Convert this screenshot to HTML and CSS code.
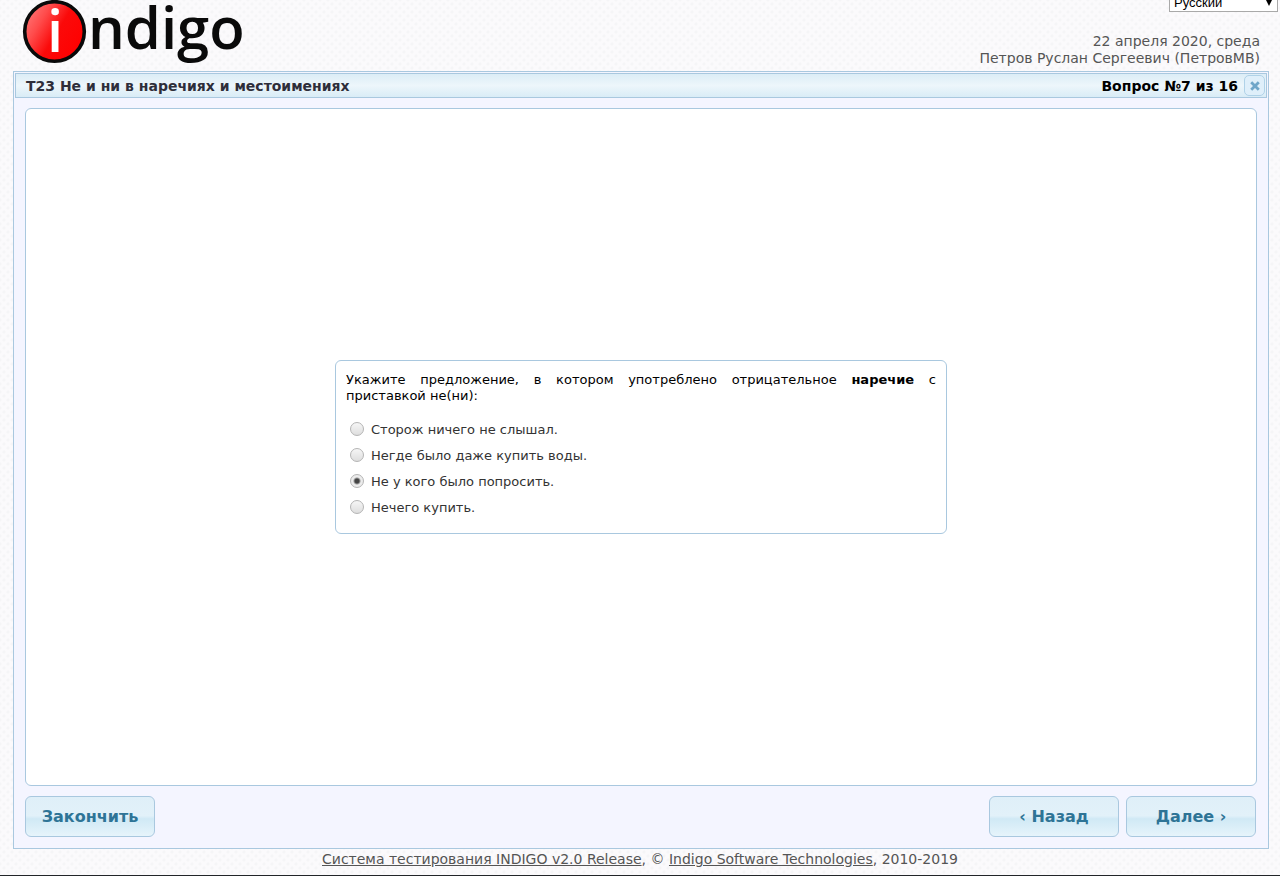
FILE: index.html
```html
<!DOCTYPE html>
<html lang="ru">
<head>
    <meta charset="UTF-8">
    <meta name="viewport" content="width=device-width, initial-scale=1.0">
    <title>INDIGO</title>
    <link rel="stylesheet" href="styles.css">
</head>
<body>
    <header class="header">
        <svg class="logo" width="240" height="68" viewBox="0 0 240 68" role="img" aria-label="indigo">
            <defs>
                <linearGradient id="ball" x1="0" y1="0.1" x2="1" y2="0.7">
                    <stop offset="0" stop-color="#ff8080"/>
                    <stop offset="0.3" stop-color="#ff4b4b"/>
                    <stop offset="0.58" stop-color="#fb0a0a"/>
                    <stop offset="1" stop-color="#ff0000"/>
                </linearGradient>
            </defs>
            <circle cx="41.5" cy="31.5" r="29.8" fill="url(#ball)" stroke="#0a0a0a" stroke-width="3.6"/>
            <text class="logo-i" x="42" y="52" text-anchor="middle">i</text>
            <text class="logo-text" x="75" y="49">ndigo</text>
        </svg>
        <div class="header-right">
            <div class="lang">
                <select class="lang-select" aria-label="Язык">
                    <option>Русский</option>
                </select>
            </div>
            <div class="user-info">
                <div>22 апреля 2020, среда</div>
                <div>Петров Руслан Сергеевич (ПетровМВ)</div>
            </div>
        </div>
    </header>

    <main class="window">
        <div class="titlebar">
            <h1 class="title">Т23 Не и ни в наречиях и местоимениях</h1>
            <span class="counter">Вопрос №7 из 16</span>
            <button type="button" class="close" aria-label="Закрыть">
                <svg width="10" height="10" viewBox="0 0 10 10">
                    <path d="M2.2 2.2L7.8 7.8M7.8 2.2L2.2 7.8" stroke="#6fa6c9" stroke-width="2.8" stroke-linecap="square"/>
                </svg>
            </button>
        </div>

        <div class="content">
            <form class="question" id="question">
                <p class="question-text">Укажите предложение, в котором употреблено отрицательное <b>наречие</b> с приставкой не(ни):</p>
                <div class="answers">
                    <label class="answer"><input type="radio" name="answer"> Сторож ничего не слышал.</label>
                    <label class="answer"><input type="radio" name="answer"> Негде было даже купить воды.</label>
                    <label class="answer"><input type="radio" name="answer" checked> Не у кого было попросить.</label>
                    <label class="answer"><input type="radio" name="answer"> Нечего купить.</label>
                </div>
            </form>
        </div>

        <div class="buttons">
            <button type="button" class="btn btn-finish">Закончить</button>
            <button type="button" class="btn">‹ Назад</button>
            <button type="button" class="btn">Далее ›</button>
        </div>
    </main>

    <footer class="footer">
        <a href="#">Система тестирования INDIGO v2.0 Release</a>, © <a href="#">Indigo Software Technologies</a>, 2010-2019
    </footer>
</body>
</html>
```
FILE: styles.css
```css
* {
    box-sizing: border-box;
}

body {
    display: flex;
    flex-direction: column;
    min-height: 100vh;
    margin: 0;
    font-family: Verdana, "DejaVu Sans", sans-serif;
    font-size: 14px;
    color: #555;
    background-color: #fbfafc;
    background-image:
        radial-gradient(circle, #f5f5f7 1px, transparent 2px),
        radial-gradient(circle, #f5f5f7 1px, transparent 2px);
    background-size: 8px 8px;
    background-position: 0 0, 4px 4px;
}

/* header */

.header {
    display: flex;
    justify-content: space-between;
    height: 71px;
    padding-left: 13px;
}

.logo {
    overflow: visible;
}

.logo-i,
.logo-text {
    font-family: "Open Sans", sans-serif;
    font-size: 58px;
    font-weight: 600;
    fill: #0a0a0a;
}

.logo-i {
    fill: #fff;
}

.header-right {
    display: flex;
    flex-direction: column;
    align-items: flex-end;
}

.lang {
    position: relative;
    margin: -8px 2px 21px 0;
}

.lang::after {
    content: "";
    position: absolute;
    top: 8px;
    right: 6px;
    border: 3px solid transparent;
    border-top: 6px solid #000;
    border-bottom: 0;
    pointer-events: none;
}

.lang-select {
    display: block;
    width: 109px;
    height: 20px;
    padding: 0 4px;
    border: 1px solid #a9a9a9;
    border-radius: 0;
    background: #fff;
    color: #000;
    font-family: "Liberation Sans", Arial, sans-serif;
    font-size: 13px;
    appearance: none;
}

.user-info {
    padding-right: 20px;
    line-height: 17px;
    text-align: right;
}

/* window */

.window {
    display: flex;
    flex-direction: column;
    flex: 1;
    margin: 0 11px 0 13px;
    padding: 1px;
    border: 1px solid #a9c8df;
    background: #f4f5ff;
}

.titlebar {
    display: flex;
    align-items: center;
    height: 25px;
    padding: 0 1px 0 10px;
    border: 1px solid #a9c8df;
    background: linear-gradient(#dcedf6, #edf6fb 50%, #d9ecf6);
}

.title {
    flex: 1;
    margin: 0;
    color: #2e2e3a;
    font-size: 14px;
}

.counter {
    margin-right: 6px;
    color: #000;
    font-weight: bold;
}

.close {
    display: flex;
    align-items: center;
    justify-content: center;
    width: 21px;
    height: 21px;
    padding: 0;
    border: 1px solid #b0d2e8;
    border-radius: 5px;
    background: #dfeffa;
    cursor: pointer;
}

.content {
    display: flex;
    align-items: center;
    justify-content: center;
    flex: 1;
    margin: 10px;
    border: 1px solid #a9c8df;
    border-radius: 6px;
    background: #fff;
}

.question {
    width: 612px;
    padding: 11px 10px 13px;
    border: 1px solid #a9c8df;
    border-radius: 6px;
    color: #000;
    font-size: 13px;
}

.question-text {
    margin: 0 0 12px;
    line-height: 16px;
    text-align: justify;
}

.answer {
    display: flex;
    align-items: center;
    gap: 7px;
    height: 26px;
    padding-left: 4px;
    color: #333;
}

.answer input {
    width: 14px;
    height: 14px;
    margin: 0;
    border: 1px solid #b4b4b4;
    border-radius: 50%;
    background: linear-gradient(#f6f6f6, #dedede);
    appearance: none;
}

.answer input:checked {
    background: radial-gradient(circle, #444 2px, #ececec 4px);
}

.buttons {
    display: flex;
    gap: 7px;
    padding: 0 11px 10px 10px;
}

.btn {
    width: 130px;
    height: 41px;
    padding: 0;
    border: 1px solid #a9c8df;
    border-radius: 6px;
    background: linear-gradient(#dfeff8, #e2f1f9 48%, #d0e9f5 56%, #e6f4fb);
    color: #2e7496;
    font-family: inherit;
    font-size: 16px;
    font-weight: bold;
    cursor: pointer;
}

.btn-finish {
    margin-right: auto;
}

.footer {
    height: 27px;
    padding-top: 2px;
    border-bottom: 1px solid #222529;
    line-height: 17px;
    text-align: center;
}

.footer a {
    color: inherit;
}
```
